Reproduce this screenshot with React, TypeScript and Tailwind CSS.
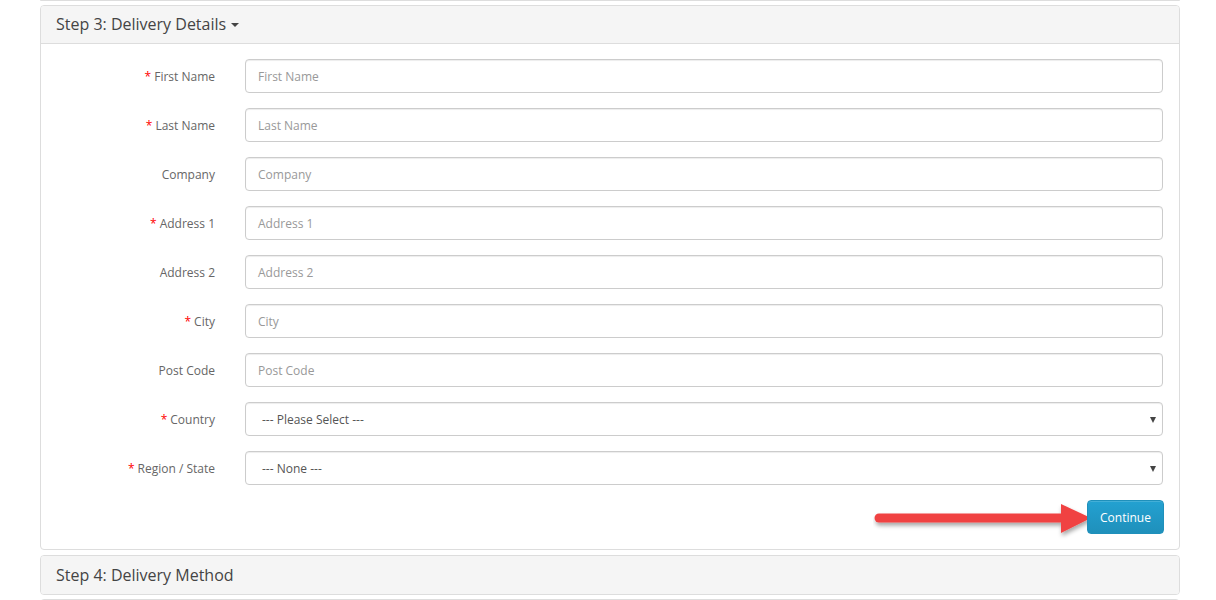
const FIELDS: { label: string; required: boolean; kind: "input" | "select"; text: string }[] = [
  { label: "First Name", required: true, kind: "input", text: "First Name" },
  { label: "Last Name", required: true, kind: "input", text: "Last Name" },
  { label: "Company", required: false, kind: "input", text: "Company" },
  { label: "Address 1", required: true, kind: "input", text: "Address 1" },
  { label: "Address 2", required: false, kind: "input", text: "Address 2" },
  { label: "City", required: true, kind: "input", text: "City" },
  { label: "Post Code", required: false, kind: "input", text: "Post Code" },
  { label: "Country", required: true, kind: "select", text: "--- Please Select ---" },
  { label: "Region / State", required: true, kind: "select", text: "--- None ---" },
];

export default function App() {
  return (
    <main className="h-[600px] w-[1216px] overflow-hidden bg-white font-['Open_Sans',sans-serif] text-[#666]">
      <div className="ml-[40px] mr-[36px]">
        {/* tail of the previous step */}
        <div className="h-px rounded-b border-b border-[#ddd]" />

        <section className="mt-[4px] rounded-[4px] border border-[#ddd]">
          <header className="flex h-[38px] items-center rounded-t-[3px] border-b border-[#ddd] bg-[#f5f5f5] px-[15px] pb-px text-[16px] text-[#444]">
            Step 3: Delivery Details
            <span className="ml-[5px] mt-[2px] inline-block h-0 w-0 border-x-[4px] border-t-[4px] border-x-transparent border-t-[#444]" />
          </header>

          <div className="flex flex-col gap-[15px] py-[15px] pl-[15px] pr-[16px]">
            {FIELDS.map((f) => (
              <div key={f.label} className="flex items-center gap-[30px]">
                <label className="w-[159px] pt-px text-right text-[12px] text-[#666]">
                  {f.required && <span className="mr-[3px] text-[#f00]">*</span>}
                  {f.label}
                </label>
                <div className="relative flex h-[34px] flex-1 items-center rounded-[4px] border border-[#ccc] bg-white px-[12px] pt-px text-[12px] shadow-[inset_0_1px_1px_rgba(0,0,0,0.075)]">
                  {f.kind === "input" ? (
                    <span className="text-[#999]">{f.text}</span>
                  ) : (
                    <>
                      <span className="pl-[4px] text-[#555]">{f.text}</span>
                      <span className="absolute right-[6px] top-[14px] h-0 w-0 border-x-[3.5px] border-t-[6px] border-x-transparent border-t-[#444]" />
                    </>
                  )}
                </div>
              </div>
            ))}

            <div className="relative flex justify-end">
              <svg
                className="absolute left-[817px] top-0"
                width="232"
                height="44"
                viewBox="0 0 232 44"
              >
                <defs>
                  <filter id="sh" x="-10%" y="-30%" width="120%" height="180%">
                    <feDropShadow dx="1" dy="3" stdDeviation="2" floodColor="#000" floodOpacity="0.35" />
                  </filter>
                </defs>
                <g filter="url(#sh)">
                  <line x1="6" y1="18" x2="190" y2="18" stroke="#f04343" strokeWidth="9" strokeLinecap="round" />
                  <polygon points="188,4 218,18 188,33" fill="#f04343" />
                </g>
              </svg>
              <button className="relative -mr-px h-[34px] w-[77px] rounded-[4px] border border-[#1f90bb] bg-gradient-to-b from-[#23a1d1] to-[#1f90bb] pt-[2px] text-[12px] text-white shadow-[inset_0_1px_0_rgba(255,255,255,0.15)]">
                Continue
              </button>
            </div>
          </div>
        </section>

        <section className="mt-[5px] rounded-[4px] border border-[#ddd]">
          <header className="flex h-[38px] items-center rounded-[3px] bg-[#f5f5f5] px-[15px] pb-px text-[16px] text-[#444]">
            Step 4: Delivery Method
          </header>
        </section>

        <section className="mt-[4px] h-[20px] rounded-[4px] border border-[#ddd] bg-[#f5f5f5]" />
      </div>
    </main>
  );
}
